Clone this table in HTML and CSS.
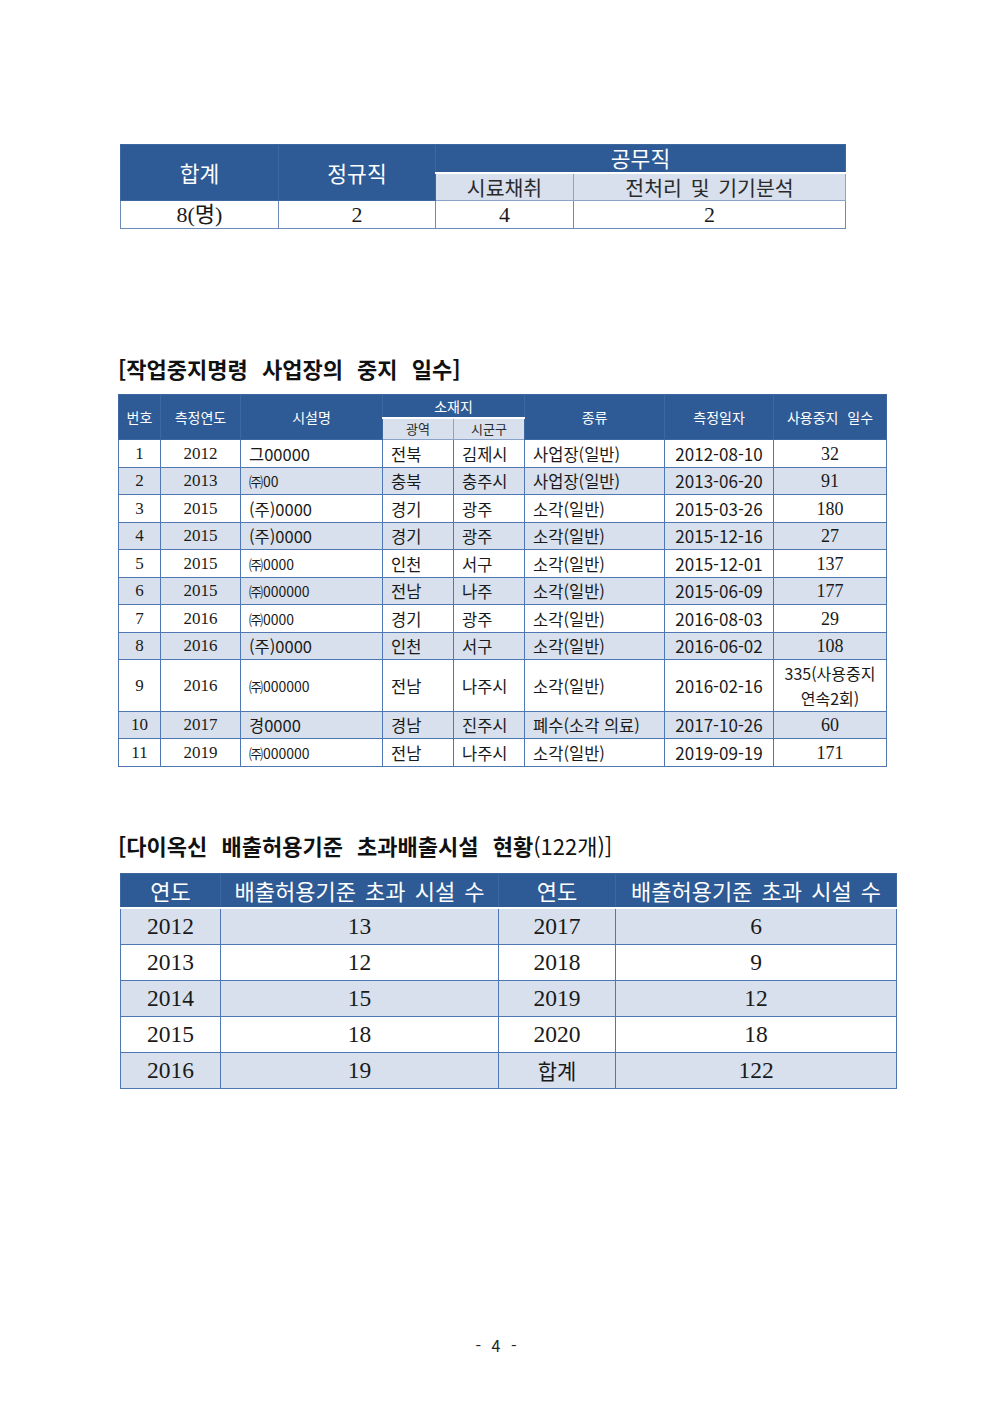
FILE: index.html
```html
<!DOCTYPE html>
<html lang="ko">
<head>
<meta charset="utf-8">
<title>작업중지명령 사업장</title>
<link rel="stylesheet" href="styles.css">
</head>
<body>
<div class="page">
  <table class="t1">
    <colgroup><col class="c158"><col class="c157"><col class="c138"><col class="c272"></colgroup>
    <tr class="t1-h1">
      <th rowspan="2" class="hd">합계</th>
      <th rowspan="2" class="hd">정규직</th>
      <th colspan="2" class="hd hd-top">공무직</th>
    </tr>
    <tr class="t1-h2">
      <th class="sub">시료채취</th>
      <th class="sub">전처리 및 기기분석</th>
    </tr>
    <tr class="t1-d">
      <td>8(명)</td><td>2</td><td>4</td><td>2</td>
    </tr>
  </table>

  <h2 class="title t2-title">[작업중지명령 사업장의 중지 일수]</h2>

  <table class="t2">
    <colgroup>
      <col class="w42"><col class="w80"><col class="w142"><col class="w71"><col class="w71"><col class="w140"><col class="w109"><col class="w113">
    </colgroup>
    <tr class="t2-h1">
      <th rowspan="2" class="hd">번호</th>
      <th rowspan="2" class="hd">측정연도</th>
      <th rowspan="2" class="hd">시설명</th>
      <th colspan="2" class="hd hd-top">소재지</th>
      <th rowspan="2" class="hd">종류</th>
      <th rowspan="2" class="hd">측정일자</th>
      <th rowspan="2" class="hd wide">사용중지 일수</th>
    </tr>
    <tr class="t2-h2">
      <th class="sub">광역</th>
      <th class="sub">시군구</th>
    </tr>
    <tr><td class="n">1</td><td class="n">2012</td><td class="l">그00000</td><td class="l">전북</td><td class="l">김제시</td><td class="l">사업장(일반)</td><td class="c">2012-08-10</td><td class="n e">32</td></tr>
    <tr class="alt"><td class="n">2</td><td class="n">2013</td><td class="l sm">㈜00</td><td class="l">충북</td><td class="l">충주시</td><td class="l">사업장(일반)</td><td class="c">2013-06-20</td><td class="n e">91</td></tr>
    <tr><td class="n">3</td><td class="n">2015</td><td class="l">(주)0000</td><td class="l">경기</td><td class="l">광주</td><td class="l">소각(일반)</td><td class="c">2015-03-26</td><td class="n e">180</td></tr>
    <tr class="alt"><td class="n">4</td><td class="n">2015</td><td class="l">(주)0000</td><td class="l">경기</td><td class="l">광주</td><td class="l">소각(일반)</td><td class="c">2015-12-16</td><td class="n e">27</td></tr>
    <tr><td class="n">5</td><td class="n">2015</td><td class="l sm">㈜0000</td><td class="l">인천</td><td class="l">서구</td><td class="l">소각(일반)</td><td class="c">2015-12-01</td><td class="n e">137</td></tr>
    <tr class="alt"><td class="n">6</td><td class="n">2015</td><td class="l sm">㈜000000</td><td class="l">전남</td><td class="l">나주</td><td class="l">소각(일반)</td><td class="c">2015-06-09</td><td class="n e">177</td></tr>
    <tr><td class="n">7</td><td class="n">2016</td><td class="l sm">㈜0000</td><td class="l">경기</td><td class="l">광주</td><td class="l">소각(일반)</td><td class="c">2016-08-03</td><td class="n e">29</td></tr>
    <tr class="alt"><td class="n">8</td><td class="n">2016</td><td class="l">(주)0000</td><td class="l">인천</td><td class="l">서구</td><td class="l">소각(일반)</td><td class="c">2016-06-02</td><td class="n e">108</td></tr>
    <tr class="tall"><td class="n">9</td><td class="n">2016</td><td class="l sm">㈜000000</td><td class="l">전남</td><td class="l">나주시</td><td class="l">소각(일반)</td><td class="c">2016-02-16</td><td class="two">335(사용중지<br>연속2회)</td></tr>
    <tr class="alt"><td class="n">10</td><td class="n">2017</td><td class="l">경0000</td><td class="l">경남</td><td class="l">진주시</td><td class="l">폐수(소각 의료)</td><td class="c">2017-10-26</td><td class="n e">60</td></tr>
    <tr><td class="n">11</td><td class="n">2019</td><td class="l sm">㈜000000</td><td class="l">전남</td><td class="l">나주시</td><td class="l">소각(일반)</td><td class="c">2019-09-19</td><td class="n e">171</td></tr>
  </table>

  <h2 class="title t3-title">[다이옥신 배출허용기준 초과배출시설 현황<span class="normal">(122개)]</span></h2>

  <table class="t3">
    <colgroup><col class="w100"><col class="w278"><col class="w117"><col class="w281"></colgroup>
    <tr class="t3-h">
      <th class="hd">연도</th><th class="hd">배출허용기준 초과 시설 수</th><th class="hd">연도</th><th class="hd">배출허용기준 초과 시설 수</th>
    </tr>
    <tr class="alt"><td>2012</td><td>13</td><td>2017</td><td>6</td></tr>
    <tr><td>2013</td><td>12</td><td>2018</td><td>9</td></tr>
    <tr class="alt"><td>2014</td><td>15</td><td>2019</td><td>12</td></tr>
    <tr><td>2015</td><td>18</td><td>2020</td><td>18</td></tr>
    <tr class="alt"><td>2016</td><td>19</td><td class="ko">합계</td><td>122</td></tr>
  </table>

  <div class="pagenum">- 4 -</div>
</div>
</body>
</html>
```

FILE: styles.css
```css
html, body {
  margin: 0;
  padding: 0;
  background: #ffffff;
}

body {
  width: 992px;
  height: 1403px;
  font-family: "Liberation Serif", "Noto Sans CJK KR", serif;
  color: #1a1a1a;
}

.page {
  padding-top: 144px;
  box-sizing: border-box;
  height: 1403px;
}

table {
  border-collapse: collapse;
  table-layout: fixed;
}

th, td {
  padding: 0;
  text-align: center;
  vertical-align: middle;
  white-space: nowrap;
}

.hd {
  background: #2e5b95;
  color: #ffffff;
  font-family: "Noto Sans CJK KR", sans-serif;
  font-weight: 400;
  border: 1px solid #3d67a1;
}

.hd-top {
  border-bottom: 2px solid #ffffff;
}

.sub {
  background: #d7e0ec;
  color: #2a2a2a;
  font-family: "Noto Sans CJK KR", sans-serif;
  font-weight: 400;
  border: 1px solid #8aa3c8;
  border-top: 2px solid #ffffff;
}

/* ---------- table 1 ---------- */
.t1 {
  margin-left: 120px;
  width: 725px;
}
.c158 { width: 158px; }
.c157 { width: 157px; }
.c138 { width: 138px; }
.c272 { width: 272px; }

.t1 .hd { font-size: 21.5px; line-height: 24px; }
.t1-h1 { height: 28px; }
.t1-h2 { height: 28px; }
.t1 .hd-top { line-height: 24px; }
.t1 .sub { font-size: 20.5px; line-height: 24px; word-spacing: 3px; }
.t1-d { height: 28px; }
.t1-d td {
  font-size: 22px;
  line-height: 26px;
  border: 1px solid #6e8bb8;
}

/* ---------- titles ---------- */
.title {
  margin: 0 0 0 118px;
  font-family: "Noto Sans CJK KR", sans-serif;
  font-weight: 700;
  font-size: 22px;
  line-height: 26px;
  color: #111111;
  word-spacing: 8px;
}
.t2-title {
  margin-top: 126px;
  margin-bottom: 13px;
}
.t3-title {
  margin-top: 65px;
  margin-bottom: 15px;
}
.normal {
  font-weight: 400;
}

/* ---------- table 2 ---------- */
.t2 {
  margin-left: 118px;
  width: 768px;
}
.w42 { width: 42px; }
.w80 { width: 80px; }
.w142 { width: 142px; }
.w71 { width: 71px; }
.w140 { width: 140px; }
.w109 { width: 109px; }
.w113 { width: 113px; }

.t2 .hd { font-size: 14px; line-height: 18px; }
.t2 .hd.wide { word-spacing: 5px; }
.t2-h1 { height: 23px; }
.t2-h2 { height: 22px; }
.t2 .hd-top { line-height: 18px; }
.t2 .sub { font-size: 13px; line-height: 18px; }

.t2 td {
  height: 27px;
  border: 1px solid #4f78b3;
  font-size: 16px;
  line-height: 22px;
}
.t2 tr.alt td {
  height: 26px;
}
.t2 td.n {
  font-family: "Liberation Serif", "Noto Sans CJK KR", serif;
  font-size: 17px;
}
.t2 td.n.e {
  font-size: 18px;
}
.t2 td.l {
  text-align: left;
  padding-left: 8px;
  font-family: "Noto Sans CJK KR", sans-serif;
  font-size: 16.5px;
}
.t2 td.l.sm {
  font-size: 14px;
}
.t2 td.c {
  font-family: "Noto Sans CJK KR", sans-serif;
  font-size: 17px;
}
.t2 td.two {
  font-family: "Noto Sans CJK KR", sans-serif;
  font-size: 16px;
  line-height: 25px;
}
.t2 tr.tall td {
  height: 51px;
}
tr.alt td {
  background: #d7e0ec;
}

/* ---------- table 3 ---------- */
.t3 {
  margin-left: 120px;
  width: 776px;
}
.w100 { width: 100px; }
.w278 { width: 278px; }
.w117 { width: 117px; }
.w281 { width: 281px; }

.t3-h { height: 34px; }
.t3 .hd {
  font-size: 22px;
  line-height: 30px;
  word-spacing: 3px;
  border-bottom: 2px solid #ffffff;
}
.t3 td {
  height: 35px;
  border: 1px solid #4f78b3;
  font-size: 23.5px;
  line-height: 30px;
}
.t3 td.ko {
  font-family: "Noto Sans CJK KR", sans-serif;
  font-size: 21px;
}

/* ---------- page number ---------- */
.pagenum {
  margin-top: 246px;
  text-align: center;
  font-family: "Noto Sans CJK KR", sans-serif;
  font-size: 16px;
  line-height: 20px;
  word-spacing: 6px;
  color: #222222;
}
```
